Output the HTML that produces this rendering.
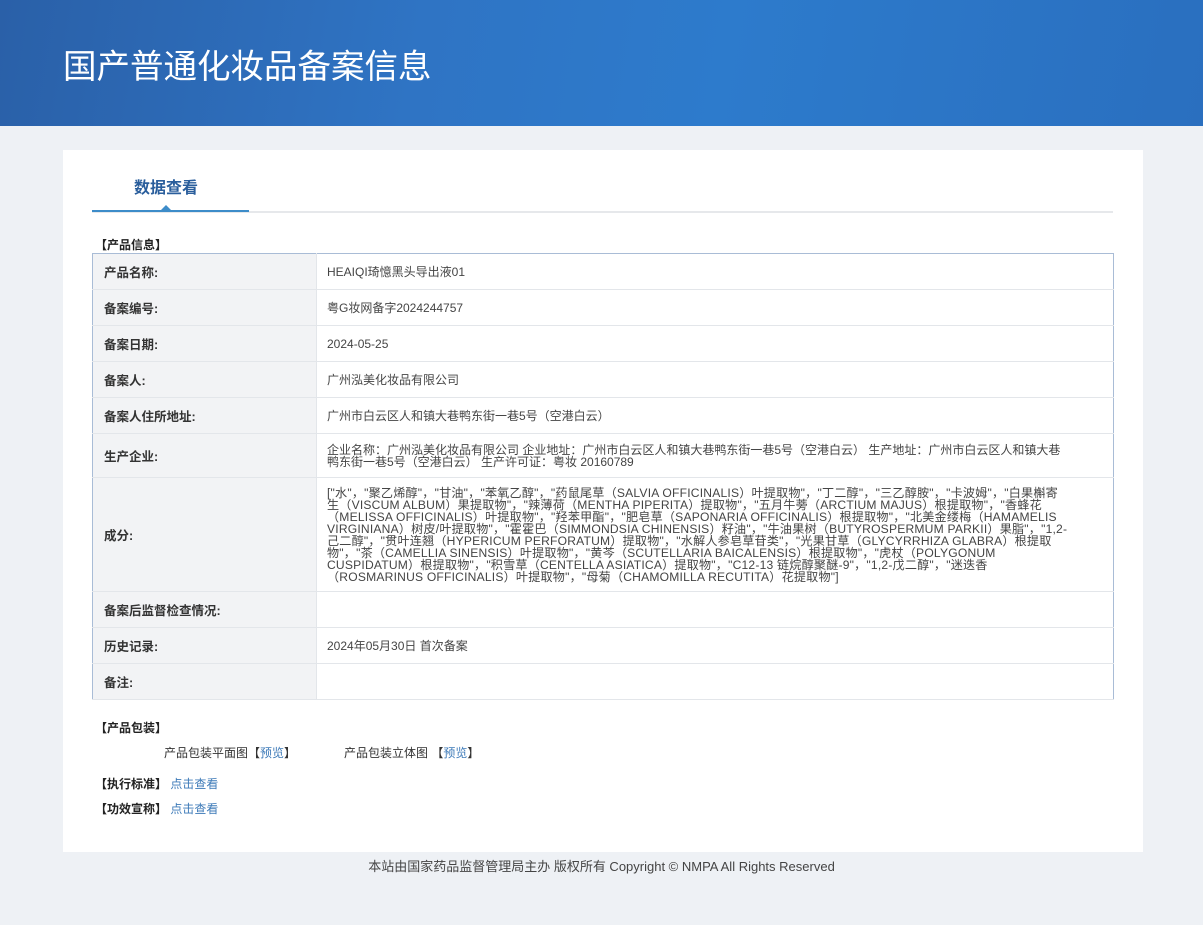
<!DOCTYPE html>
<html><head><meta charset="utf-8"><style>
*{margin:0;padding:0;box-sizing:border-box}
body{width:1203px;height:925px;background:#eef1f5;font-family:"Liberation Sans","Noto Sans CJK SC",sans-serif;color:#333;font-size:12px;overflow:hidden;position:relative}
.hdr{position:absolute;left:0;top:0;width:1203px;height:126px;background:linear-gradient(100deg,#2a60a8 0%,#2f74c4 35%,#2d7bcc 60%,#2a6fbf 100%)}
.hdr h1{position:absolute;left:63px;top:39px;font-size:33.5px;font-weight:normal;color:#fff;font-family:"Noto Sans CJK SC",sans-serif}
.card{position:absolute;left:63px;top:150px;width:1080px;height:702px;background:#fff}
.tab{position:absolute;left:71px;top:24px;font-size:16px;font-weight:bold;color:#2a5e9c}
.line{position:absolute;left:29px;top:61px;width:1021px;height:2px;background:#e6e8eb}
.line2{position:absolute;left:29px;top:60px;width:157px;height:2px;background:#3d8cc9}
.tri{position:absolute;left:97px;top:55px;width:0;height:0;border-left:6px solid transparent;border-right:6px solid transparent;border-bottom:6px solid #3d8cc9}
.sec{position:absolute;font-weight:bold;color:#222;font-size:12px}
table{position:absolute;left:29px;top:103px;width:1022px;border-collapse:collapse;border:1px solid #a9bcd6}
td{border-bottom:1px solid #e3e6ea;vertical-align:middle;font-size:12px}
td.l{width:224px;background:#f2f3f5;font-weight:bold;color:#333;padding-left:11px;border-right:1px solid #e3e6ea;font-size:12.5px}
td.v{padding-left:10px;color:#444;line-height:12px}
.a{color:#3d7ab8}
.ft{position:absolute;top:856px;left:0;width:1203px;text-align:center;font-size:13px;color:#444}
</style></head><body>
<div class="hdr"><h1>国产普通化妆品备案信息</h1></div>
<div class="card">
<div class="tab">数据查看</div>
<div class="line"></div><div class="line2"></div><div class="tri"></div>
<div class="sec" style="left:32px;top:86px">【产品信息】</div>
<table>
<tr style="height:36px"><td class="l">产品名称:</td><td class="v">HEAIQI琦憶黑头导出液01</td></tr>
<tr style="height:36px"><td class="l">备案编号:</td><td class="v">粤G妆网备字2024244757</td></tr>
<tr style="height:36px"><td class="l">备案日期:</td><td class="v">2024-05-25</td></tr>
<tr style="height:36px"><td class="l">备案人:</td><td class="v">广州泓美化妆品有限公司</td></tr>
<tr style="height:36px"><td class="l">备案人住所地址:</td><td class="v">广州市白云区人和镇大巷鸭东街一巷5号（空港白云）</td></tr>
<tr style="height:44px"><td class="l">生产企业:</td><td class="v" style="white-space:nowrap">企业名称：广州泓美化妆品有限公司 企业地址：广州市白云区人和镇大巷鸭东街一巷5号（空港白云） 生产地址：广州市白云区人和镇大巷<br>鸭东街一巷5号（空港白云） 生产许可证：粤妆 20160789</td></tr>
<tr style="height:114px"><td class="l">成分:</td><td class="v" style="white-space:nowrap;font-size:12.1px;letter-spacing:0.2px">["水"，"聚乙烯醇"，"甘油"，"苯氧乙醇"，"药鼠尾草（SALVIA OFFICINALIS）叶提取物"，"丁二醇"，"三乙醇胺"，"卡波姆"，"白果槲寄<br>生（VISCUM ALBUM）果提取物"，"辣薄荷（MENTHA PIPERITA）提取物"，"五月牛蒡（ARCTIUM MAJUS）根提取物"，"香蜂花<br>（MELISSA OFFICINALIS）叶提取物"，"羟苯甲酯"，"肥皂草（SAPONARIA OFFICINALIS）根提取物"，"北美金缕梅（HAMAMELIS<br>VIRGINIANA）树皮/叶提取物"，"霍霍巴（SIMMONDSIA CHINENSIS）籽油"，"牛油果树（BUTYROSPERMUM PARKII）果脂"，"1,2-<br>己二醇"，"贯叶连翘（HYPERICUM PERFORATUM）提取物"，"水解人参皂草苷类"，"光果甘草（GLYCYRRHIZA GLABRA）根提取<br>物"，"茶（CAMELLIA SINENSIS）叶提取物"，"黄芩（SCUTELLARIA BAICALENSIS）根提取物"，"虎杖（POLYGONUM<br>CUSPIDATUM）根提取物"，"积雪草（CENTELLA ASIATICA）提取物"，"C12-13 链烷醇聚醚-9"，"1,2-戊二醇"，"迷迭香<br>（ROSMARINUS OFFICINALIS）叶提取物"，"母菊（CHAMOMILLA RECUTITA）花提取物"]</td></tr>
<tr style="height:36px"><td class="l">备案后监督检查情况:</td><td class="v"></td></tr>
<tr style="height:36px"><td class="l">历史记录:</td><td class="v">2024年05月30日 首次备案</td></tr>
<tr style="height:36px"><td class="l">备注:</td><td class="v"></td></tr>
</table>
<div class="sec" style="left:32px;top:569px">【产品包装】</div>
<div style="position:absolute;left:101px;top:594px">产品包装平面图【<span class="a">预览</span>】</div>
<div style="position:absolute;left:281px;top:594px">产品包装立体图 【<span class="a">预览</span>】</div>
<div style="position:absolute;left:32px;top:625px"><b style="color:#222">【执行标准】</b> <span class="a">点击查看</span></div>
<div style="position:absolute;left:32px;top:650px"><b style="color:#222">【功效宣称】</b> <span class="a">点击查看</span></div>
</div>
<div class="ft">本站由国家药品监督管理局主办 版权所有 Copyright © NMPA All Rights Reserved</div>
</body></html>
